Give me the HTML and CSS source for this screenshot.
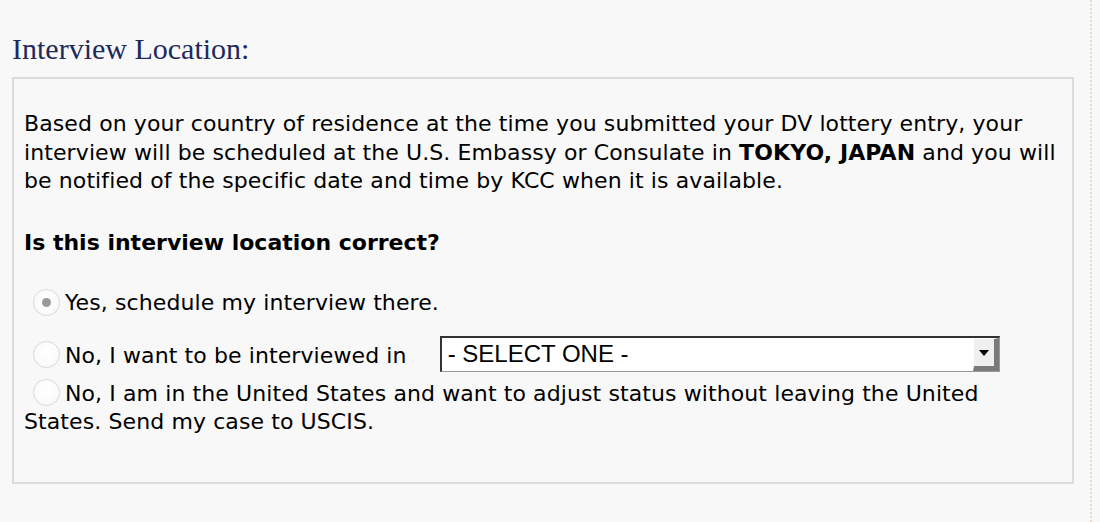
FILE: index.html
```html
<!DOCTYPE html>
<html>
<head>
<meta charset="utf-8">
<link rel="stylesheet" href="styles.css">
</head>
<body>
<div class="page">
  <h2 class="section-title">Interview Location:</h2>
  <div class="panel">
    <p class="intro">Based on your country of residence at the time you submitted your DV lottery entry, your interview will be scheduled at the U.S. Embassy or Consulate in <b>TOKYO, JAPAN</b> and you will be notified of the specific date and time by KCC when it is available.</p>
    <p class="question">Is this interview location correct?</p>
    <div class="option option-yes">
      <input type="radio" class="radio radio-checked" name="loc" checked disabled><span class="label">Yes, schedule my interview there.</span>
    </div>
    <div class="option option-other">
      <input type="radio" class="radio" name="loc" disabled><span class="label">No, I want to be interviewed in</span>
      <span class="select-wrap"><span class="select-text">- SELECT ONE -</span><span class="select-btn"><span class="tri"></span></span></span>
    </div>
    <div class="option option-us">
      <input type="radio" class="radio" name="loc" disabled><span class="label">No, I am in the United States and want to adjust status without leaving the United States. Send my case to USCIS.</span>
    </div>
  </div>
</div>
</body>
</html>
```

FILE: styles.css
```css
html, body {
  margin: 0;
  padding: 0;
  background: #f8f8f8;
}
.page {
  width: 1092px;
  height: 522px;
  border-right: 2px dotted #e6dcc9;
  box-sizing: border-box;
  padding-top: 31px;
}
.section-title {
  margin: 0 0 10px 12px;
  font-family: "Liberation Serif", "Times New Roman", serif;
  font-weight: normal;
  font-size: 30px;
  line-height: 36px;
  color: #1f2a5c;
}
.panel {
  margin-left: 12px;
  width: 1062px;
  height: 407px;
  box-sizing: border-box;
  border: 2px solid #dcdcdc;
  padding: 31px 12px 0 10px;
  font-family: "DejaVu Sans", Verdana, sans-serif;
  font-size: 22px;
  line-height: 28.5px;
  letter-spacing: 0.1px;
  color: #000;
}
.intro {
  margin: 0;
}
.question {
  margin: 33px 0 0 0;
  font-weight: bold;
  letter-spacing: 0;
}
.option-yes {
  margin-top: 32px;
}
.option-other {
  margin-top: 20px;
  height: 36px;
  line-height: 36px;
}
.option-us {
  margin-top: 6px;
}
.radio {
  appearance: none;
  -webkit-appearance: none;
  width: 27px;
  height: 27px;
  margin: 0 5px 0 9px;
  border-radius: 50%;
  border: 1px solid #dadada;
  background: radial-gradient(circle at 50% 40%, #ffffff 0%, #fbfbfb 60%, #f1f1f1 100%);
  box-shadow: 0 0 1px rgba(0,0,0,0.06);
  vertical-align: middle;
  position: relative;
  top: -2px;
  box-sizing: border-box;
}
.radio-checked::after {
  content: "";
  position: absolute;
  left: 50%;
  top: 50%;
  width: 9px;
  height: 9px;
  margin: -4.5px 0 0 -4.5px;
  border-radius: 50%;
  background: #9a9a9a;
}
.select-wrap {
  display: inline-flex;
  vertical-align: middle;
  margin-left: 26px;
  width: 560px;
  height: 36px;
  box-sizing: border-box;
  border-top: 2px solid #333;
  border-left: 2px solid #333;
  border-right: 1px solid #999;
  border-bottom: 1px solid #999;
  background: #fff;
  position: relative;
  top: -3px;
  letter-spacing: 0;
}
.select-text {
  flex: 1;
  font-family: "Liberation Sans", Arial, sans-serif;
  font-size: 24px;
  line-height: 32px;
  padding-left: 6px;
  color: #000;
}
.select-btn {
  width: 26px;
  box-sizing: border-box;
  background: #efefef;
  border-top: 1px solid #fff;
  border-left: 1px solid #fff;
  border-right: 5px solid #7a7a7a;
  border-bottom: 5px solid #7a7a7a;
  display: flex;
  align-items: center;
  justify-content: center;
}
.tri {
  width: 0;
  height: 0;
  border-left: 5px solid transparent;
  border-right: 5px solid transparent;
  border-top: 6px solid #000;
  margin-top: 2px;
}
```
